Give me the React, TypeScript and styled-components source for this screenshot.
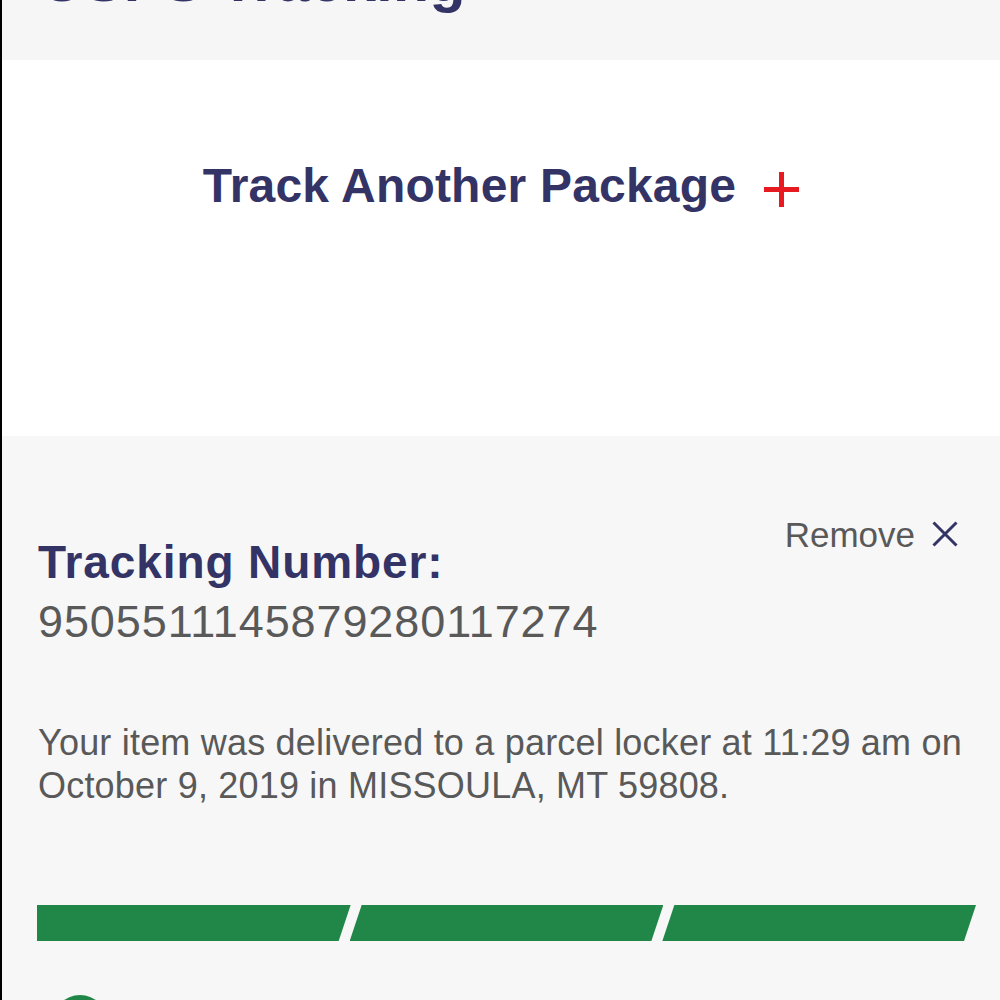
import React from "react";
import styled, { createGlobalStyle } from "styled-components";

const Global = createGlobalStyle`
  html, body { margin: 0; padding: 0; background: #f7f7f7; }
  body { font-family: "Liberation Sans", Arial, Helvetica, sans-serif; overflow: hidden; }
  * { box-sizing: border-box; }
`;

const Page = styled.div`
  border-left: 2px solid #000;
  min-height: 1100px;
  background: #f7f7f7;
`;

const Header = styled.header`
  height: 60px;
  overflow: hidden;
  background: #f6f6f6;
  padding-left: 39px;
`;

const Title = styled.h1`
  margin: -48px 0 0;
  font-size: 59px;
  line-height: 58px;
  font-weight: 700;
  letter-spacing: 0.4px;
  color: #333366;
  white-space: nowrap;
`;

const TrackPanel = styled.section`
  background: #fff;
  height: 376px;
  padding-top: 98px;
  display: flex;
  justify-content: center;
  align-items: flex-start;
`;

const TrackButton = styled.button`
  display: flex;
  align-items: center;
  gap: 28px;
  border: 0;
  background: none;
  padding: 0;
  font-family: inherit;
  font-size: 48px;
  line-height: 56px;
  font-weight: 700;
  letter-spacing: 0.2px;
  color: #333366;
  cursor: pointer;
`;

const PlusIcon = styled.svg`
  width: 35px;
  height: 35px;
  margin-top: 6px;
`;

const Result = styled.section`
  background: #f7f7f7;
  padding: 79px 42px 0 36px;
`;

const TopRow = styled.div`
  display: grid;
  grid-template-columns: 1fr auto;
  align-items: start;
`;

const NumberBlock = styled.div`
  padding-top: 21px;
`;

const Heading = styled.h2`
  margin: 0;
  font-size: 46px;
  line-height: 52px;
  font-weight: 700;
  letter-spacing: 0.9px;
  color: #333366;
`;

const TrackingNumber = styled.div`
  margin-top: 8px;
  font-size: 45px;
  line-height: 52px;
  letter-spacing: 0.9px;
  color: #595959;
`;

const RemoveButton = styled.button`
  display: flex;
  align-items: center;
  gap: 17px;
  border: 0;
  background: none;
  padding: 0;
  font-family: inherit;
  font-size: 35px;
  line-height: 40px;
  color: #595959;
  cursor: pointer;
`;

const CloseIcon = styled.svg`
  width: 26px;
  height: 26px;
  margin-top: -2px;
`;

const Status = styled.p`
  margin: 73px -16px 0 0;
  font-size: 36px;
  line-height: 43px;
  letter-spacing: 0.2px;
  color: #595959;
`;

const Progress = styled.div`
  margin-top: 98px;
  margin-left: -1px;
  margin-right: -18px;
  display: flex;
  height: 36px;
`;

const Segment = styled.div<{ $first?: boolean }>`
  flex: 1;
  background: #218748;
  margin-left: ${(p) => (p.$first ? "0" : "-1px")};
  clip-path: ${(p) =>
    p.$first
      ? "polygon(0 0, 100% 0, calc(100% - 12px) 100%, 0 100%)"
      : "polygon(12px 0, 100% 0, calc(100% - 12px) 100%, 0 100%)"};
`;

const EventRow = styled.div`
  margin-top: 54px;
  margin-left: 14px;
  display: flex;
  align-items: flex-start;
  gap: 20px;
`;

const Dot = styled.div`
  width: 56px;
  height: 56px;
  border-radius: 50%;
  background: #218748;
  flex: none;
`;

export default function App() {
  return (
    <>
      <Global />
      <Page>
        <Header>
          <Title>USPS Tracking</Title>
        </Header>
        <TrackPanel>
          <TrackButton>
            Track Another Package
            <PlusIcon viewBox="0 0 35 35">
              <path d="M17.5 0V35M0 17.5H35" stroke="#e71921" strokeWidth="5" />
            </PlusIcon>
          </TrackButton>
        </TrackPanel>
        <Result>
          <TopRow>
            <NumberBlock>
              <Heading>Tracking Number:</Heading>
              <TrackingNumber>9505511145879280117274</TrackingNumber>
            </NumberBlock>
            <RemoveButton>
              Remove
              <CloseIcon viewBox="0 0 26 26">
                <path d="M1.5 1.5L24.5 24.5M24.5 1.5L1.5 24.5" stroke="#333366" strokeWidth="3" />
              </CloseIcon>
            </RemoveButton>
          </TopRow>
          <Status>
            Your item was delivered to a parcel locker at 11:29 am on October 9, 2019 in
            MISSOULA, MT 59808.
          </Status>
          <Progress>
            <Segment $first />
            <Segment />
            <Segment />
          </Progress>
          <EventRow>
            <Dot />
          </EventRow>
        </Result>
      </Page>
    </>
  );
}
